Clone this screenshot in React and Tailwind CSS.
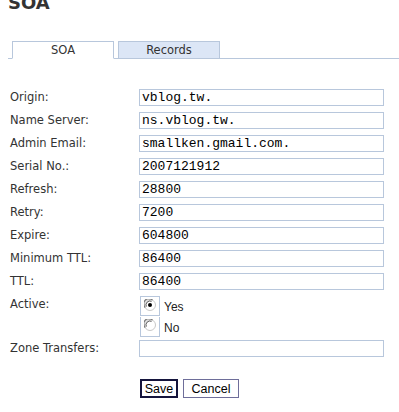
const fields = [
  { label: 'Origin:', value: 'vblog.tw.' },
  { label: 'Name Server:', value: 'ns.vblog.tw.' },
  { label: 'Admin Email:', value: 'smallken.gmail.com.' },
  { label: 'Serial No.:', value: '2007121912' },
  { label: 'Refresh:', value: '28800' },
  { label: 'Retry:', value: '7200' },
  { label: 'Expire:', value: '604800' },
  { label: 'Minimum TTL:', value: '86400' },
  { label: 'TTL:', value: '86400' },
];

const Radio = ({ checked }) => (
  <svg width="12" height="12" viewBox="0 0 12 12">
    <circle cx="6" cy="6" r="5.5" fill="#fff" stroke="#c8c8c8" />
    <path d="M1.2 8.5 A5 5 0 0 1 8.5 1.2" fill="none" stroke="#7a7a7a" strokeWidth="1.2" />
    <path d="M2.3 7.6 A4 4 0 0 1 7.6 2.3" fill="none" stroke="#404040" strokeWidth="0.9" />
    {checked && <circle cx="6" cy="6" r="2" fill="#000" />}
  </svg>
);

const TextBox = ({ value }) => (
  <div className="w-[245px] h-[17px] border border-[#b8c7dc] bg-white pl-[2px] font-['Liberation_Mono',monospace] text-[13px] leading-[15px] text-black whitespace-nowrap overflow-hidden">
    {value}
  </div>
);

export default function App() {
  return (
    <div className="w-[399px] h-[412px] bg-white overflow-hidden font-['DejaVu_Sans',sans-serif] text-[#333]">
      <h1 className="mt-[-6px] pl-[8px] font-bold text-[18px] leading-[18px] text-[#333]">SOA</h1>

      {/* tabs */}
      <div className="mt-[29px] ml-[8px] flex h-[18px] border-b border-[#b8c7dc]">
        <div className="ml-[4px] w-[102px] h-[18px] mb-[-1px] border border-[#b8c7dc] border-b-white bg-white pt-[1px] text-center text-[11.5px] leading-[15px]">
          SOA
        </div>
        <div className="ml-[4px] w-[102px] h-[18px] mb-[-1px] border border-[#b8c7dc] bg-[#dce6f6] pt-[1px] text-center text-[11.5px] leading-[15px]">
          Records
        </div>
      </div>

      {/* form */}
      <div className="mt-[27px] pl-[10px] text-[11.5px]">
        {fields.map((f) => (
          <div key={f.label} className="flex items-center h-[23px]">
            <div className="w-[129px]">{f.label}</div>
            <TextBox value={f.value} />
          </div>
        ))}

        <div className="flex items-start h-[44px] pt-[2px]">
          <div className="w-[129px] pt-[1px] leading-[16px]">Active:</div>
          <div className="ml-[1px] flex flex-col">
            <div className="flex items-center">
              <div className="w-[20px] h-[20px] border border-[#b8c7dc] pl-[3px] pt-[2px]">
                <Radio checked />
              </div>
              <span className="ml-[4px] pt-[3px] font-['Liberation_Sans',sans-serif] text-[12px] text-[#222]">Yes</span>
            </div>
            <div className="flex items-center">
              <div className="w-[20px] h-[20px] border border-t-0 border-[#b8c7dc] pl-[3px] pt-[2px]">
                <Radio />
              </div>
              <span className="ml-[4px] pt-[3px] font-['Liberation_Sans',sans-serif] text-[12px] text-[#222]">No</span>
            </div>
          </div>
        </div>

        <div className="flex items-center h-[23px]">
          <div className="w-[129px]">Zone Transfers:</div>
          <TextBox value="" />
        </div>
      </div>

      <div className="mt-[19px] pl-[140px] flex gap-[5px] font-['Liberation_Sans',sans-serif] text-[12.5px] text-black">
        <button className="w-[38px] h-[19px] border-2 border-[#14143c] bg-white leading-[14px]">Save</button>
        <button className="w-[56px] h-[19px] border border-[#6e6e9a] bg-white leading-[16px]">Cancel</button>
      </div>
    </div>
  );
}
